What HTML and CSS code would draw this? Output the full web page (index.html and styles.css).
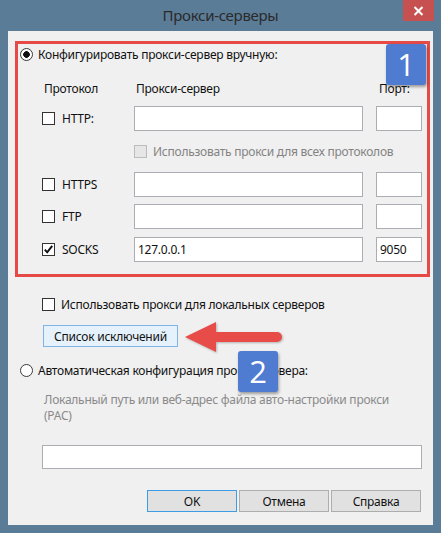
FILE: index.html
```html
<!DOCTYPE html>
<html lang="ru">
<head>
<meta charset="utf-8">
<title>Прокси-серверы</title>
<link rel="stylesheet" href="styles.css">
</head>
<body>
<div class="window">
  <div class="titlebar">
    <span></span>
    <span class="title">Прокси-серверы</span>
    <span class="close">
      <svg width="11" height="10" viewBox="0 0 11 10"><path d="M1.5 1 L9.5 9 M9.5 1 L1.5 9" stroke="#fff" stroke-width="2"/></svg>
    </span>
  </div>
  <div class="client">
    <div class="redbox">
      <div class="radio-row">
        <span class="rb on"></span>
        <span>Конфигурировать прокси-сервер вручную:</span>
      </div>
      <div class="grid-row head">
        <span class="h1">Протокол</span>
        <span class="h2">Прокси-сервер</span>
        <span class="h3">Порт:</span>
      </div>
      <div class="grid-row r-http">
        <label class="proto"><span class="cb"></span>HTTP:</label>
        <span class="input"></span>
        <span class="input"></span>
      </div>
      <div class="grid-row r-all">
        <span></span>
        <label class="proto disabled"><span class="cb dis"></span>Использовать прокси для всех протоколов</label>
      </div>
      <div class="grid-row r-https">
        <label class="proto"><span class="cb"></span>HTTPS</label>
        <span class="input"></span>
        <span class="input"></span>
      </div>
      <div class="grid-row r-ftp">
        <label class="proto"><span class="cb"></span>FTP</label>
        <span class="input"></span>
        <span class="input"></span>
      </div>
      <div class="grid-row r-socks">
        <label class="proto"><span class="cb"><svg width="11" height="11" viewBox="0 0 11 11"><path d="M1.8 5.6 L4.2 8.3 L9.2 1.8" fill="none" stroke="#111" stroke-width="2"/></svg></span>SOCKS</label>
        <span class="input">127.0.0.1</span>
        <span class="input">9050</span>
      </div>
    </div>
    <label class="local"><span class="cb"></span>Использовать прокси для локальных серверов</label>
    <div class="exc-wrap"><span class="btn exc">Список исключений</span></div>
    <div class="radio-row auto">
      <span class="rb"></span>
      <span>Автоматическая конфигурация прокси-сервера:</span>
    </div>
    <p class="pac">Локальный путь или веб-адрес файла авто-настройки прокси<br>(PAC)</p>
    <span class="input wide"></span>
    <div class="buttons">
      <span class="btn def">OK</span>
      <span class="btn">Отмена</span>
      <span class="btn">Справка</span>
    </div>
  </div>

  <div class="badge b1">1</div>
  <svg class="arrow" width="100" height="32" viewBox="0 0 100 32">
    <path d="M28 16 L92 16" stroke="#e74c48" stroke-width="10" stroke-linecap="round"/>
    <path d="M0 16 L31 1 L31 31 Z" fill="#e74c48"/>
  </svg>
  <div class="badge b2">2</div>
</div>
</body>
</html>
```

FILE: styles.css
```css
html, body {
  margin: 0;
  padding: 0;
}
body {
  font-family: "Noto Sans", "Open Sans", sans-serif;
  font-size: 12px;
  letter-spacing: -0.25px;
  color: #111;
}
.window {
  position: relative;
  width: 441px;
  height: 533px;
  background: #5b7c97;
  overflow: hidden;
}
.titlebar {
  height: 31px;
  display: grid;
  grid-template-columns: 1fr auto 1fr;
  align-items: start;
}
.title {
  font-size: 15px;
  letter-spacing: -0.3px;
  line-height: 31px;
  color: #2a2a2a;
}
.close {
  justify-self: end;
  margin-right: 7px;
  width: 31px;
  height: 21px;
  background: #c75050;
  display: flex;
  align-items: center;
  justify-content: center;
}
.client {
  margin: 0 8px;
  height: 494px;
  background: #f0f0f0;
  box-sizing: border-box;
  display: flex;
  flex-direction: column;
  align-items: flex-start;
}
.redbox {
  align-self: stretch;
  margin: 10px 3px 0 7px;
  border: 3px solid #e64a46;
  padding-bottom: 12px;
}
.radio-row {
  height: 20px;
  display: flex;
  align-items: center;
  gap: 5px;
  padding-left: 2px;
}
.rb {
  width: 13px;
  height: 13px;
  box-sizing: border-box;
  border: 1px solid #3a3a3a;
  border-radius: 50%;
  background: #fff;
  flex: none;
}
.rb.on {
  background: radial-gradient(circle, #111 0 3px, #fff 3.6px);
}
.grid-row {
  display: grid;
  grid-template-columns: 79px 229px 46px;
  column-gap: 13px;
  padding-left: 24px;
  height: 25px;
  align-items: center;
}
.head {
  height: 16px;
  margin-top: 16px;
}
.h1, .h2 { padding-left: 2px; }
.h3 { padding-left: 3px; }
.r-http { margin-top: 10px; }
.r-all { margin-top: 8px; }
.r-https { margin-top: 8px; }
.r-ftp { margin-top: 7px; }
.r-socks { margin-top: 8px; }
.r-all .proto {
  grid-column: 2 / 4;
  gap: 6px;
}
.proto {
  display: flex;
  align-items: center;
  gap: 7px;
  white-space: nowrap;
}
.disabled { color: #838383; }
.cb {
  width: 13px;
  height: 13px;
  box-sizing: border-box;
  border: 1px solid #333;
  background: #fff;
  flex: none;
  display: flex;
  align-items: center;
  justify-content: center;
}
.cb.dis {
  border-color: #bcbcbc;
  background: #e6e6e6;
}
.input {
  height: 25px;
  box-sizing: border-box;
  border: 1px solid #abadb3;
  background: #fff;
  display: flex;
  align-items: center;
  padding-left: 3px;
}
.local {
  margin: 17px 0 0 34px;
  height: 21px;
  display: flex;
  align-items: center;
  gap: 6px;
}
.exc-wrap {
  margin: 10px 0 0 35px;
}
.btn {
  width: 90px;
  height: 22px;
  box-sizing: border-box;
  border: 1px solid #adadad;
  background: #e1e1e1;
  display: flex;
  align-items: center;
  justify-content: center;
}
.exc {
  width: 135px;
  border-color: #7eb4ea;
  background: #e5f1fb;
}
.auto {
  margin: 13px 0 0 12px;
  padding-left: 0;
}
.pac {
  margin: 12px 0 0 36px;
  line-height: 16px;
  color: #8a8a8a;
}
.input.wide {
  margin: 21px 0 0 34px;
  width: 380px;
  height: 24px;
}
.buttons {
  align-self: stretch;
  margin-top: 21px;
  padding-right: 12px;
  display: flex;
  justify-content: flex-end;
  gap: 2px;
}
.btn.def {
  border-color: #3c9de6;
}
.badge {
  position: absolute;
  width: 40px;
  height: 41px;
  background: #4f7bd1;
  color: #fff;
  border-radius: 3px;
  box-shadow: 1px 2px 3px rgba(0,0,0,0.35);
  font-family: "Open Sans", "Noto Sans", sans-serif;
  font-size: 31px;
  letter-spacing: 0;
  line-height: 41px;
  text-align: center;
}
.b1 { left: 386px; top: 44px; }
.b2 { left: 238px; top: 351px; }
.arrow {
  position: absolute;
  left: 185px;
  top: 321px;
  filter: drop-shadow(1px 1px 1px rgba(0,0,0,0.25));
}
```
